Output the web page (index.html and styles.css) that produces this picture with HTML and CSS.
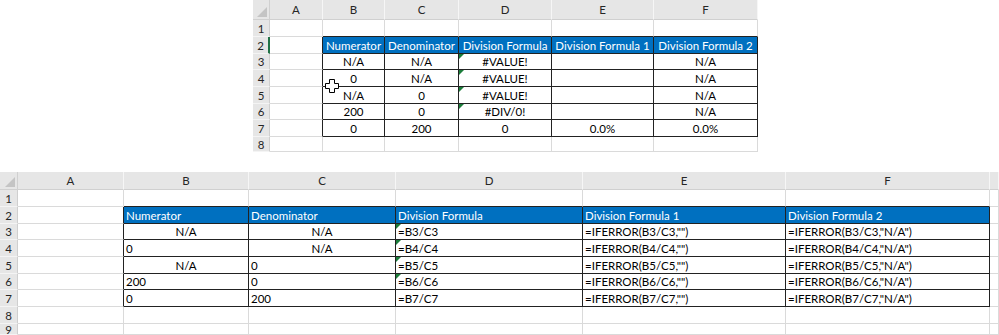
FILE: index.html
```html
<!DOCTYPE html>
<html>
<head>
<meta charset="utf-8">
<link rel="stylesheet" href="styles.css">
</head>
<body>
<div class="page">
  <div class="sheet sheet-top">
    <div class="corner"></div><div class="ch">A</div><div class="ch">B</div><div class="ch">C</div><div class="ch">D</div><div class="ch">E</div><div class="ch">F</div>

    <div class="rh">1</div><div class="c"></div><div class="c ab"></div><div class="c ab"></div><div class="c ab"></div><div class="c ab"></div><div class="c ab"></div>

    <div class="rh active">2</div><div class="c lt"></div><div class="c t hd ctr">Numerator</div><div class="c t hd ctr">Denominator</div><div class="c t hd ctr">Division Formula</div><div class="c t hd ctr">Division Formula 1</div><div class="c t hd ctr">Division Formula 2</div>

    <div class="rh">3</div><div class="c lt"></div><div class="c t ctr">N/A</div><div class="c t ctr">N/A</div><div class="c t ctr err">#VALUE!</div><div class="c t"></div><div class="c t ctr">N/A</div>

    <div class="rh">4</div><div class="c lt"></div><div class="c t ctr">0</div><div class="c t ctr">N/A</div><div class="c t ctr err">#VALUE!</div><div class="c t"></div><div class="c t ctr">N/A</div>

    <div class="rh">5</div><div class="c lt"></div><div class="c t ctr">N/A</div><div class="c t ctr">0</div><div class="c t ctr err">#VALUE!</div><div class="c t"></div><div class="c t ctr">N/A</div>

    <div class="rh">6</div><div class="c lt"></div><div class="c t ctr">200</div><div class="c t ctr">0</div><div class="c t ctr err">#DIV/0!</div><div class="c t"></div><div class="c t ctr">N/A</div>

    <div class="rh">7</div><div class="c lt"></div><div class="c t ctr">0</div><div class="c t ctr">200</div><div class="c t ctr">0</div><div class="c t ctr">0.0%</div><div class="c t ctr">0.0%</div>

    <div class="rh">8</div><div class="c"></div><div class="c"></div><div class="c"></div><div class="c"></div><div class="c"></div><div class="c"></div>

    <svg class="cursor" width="14" height="14" viewBox="0 0 14 14"><path d="M4.5 0.5h5v4h4v5h-4v4h-5v-4h-4v-5h4z" fill="#fff" stroke="#000" stroke-width="1"/></svg>
  </div>

  <div class="sheet sheet-bottom">
    <div class="corner"></div><div class="ch">A</div><div class="ch">B</div><div class="ch">C</div><div class="ch">D</div><div class="ch">E</div><div class="ch">F</div><div class="ch"></div>

    <div class="rh">1</div><div class="c"></div><div class="c ab"></div><div class="c ab"></div><div class="c ab"></div><div class="c ab"></div><div class="c ab"></div><div class="c"></div>

    <div class="rh">2</div><div class="c lt"></div><div class="c t hd">Numerator</div><div class="c t hd">Denominator</div><div class="c t hd">Division Formula</div><div class="c t hd">Division Formula 1</div><div class="c t hd">Division Formula 2</div><div class="c"></div>

    <div class="rh">3</div><div class="c lt"></div><div class="c t ctr">N/A</div><div class="c t ctr">N/A</div><div class="c t err">=B3/C3</div><div class="c t">=IFERROR(B3/C3,"")</div><div class="c t">=IFERROR(B3/C3,"N/A")</div><div class="c"></div>

    <div class="rh">4</div><div class="c lt"></div><div class="c t">0</div><div class="c t ctr">N/A</div><div class="c t err">=B4/C4</div><div class="c t">=IFERROR(B4/C4,"")</div><div class="c t">=IFERROR(B4/C4,"N/A")</div><div class="c"></div>

    <div class="rh">5</div><div class="c lt"></div><div class="c t ctr">N/A</div><div class="c t">0</div><div class="c t err">=B5/C5</div><div class="c t">=IFERROR(B5/C5,"")</div><div class="c t">=IFERROR(B5/C5,"N/A")</div><div class="c"></div>

    <div class="rh">6</div><div class="c lt"></div><div class="c t">200</div><div class="c t">0</div><div class="c t err">=B6/C6</div><div class="c t">=IFERROR(B6/C6,"")</div><div class="c t">=IFERROR(B6/C6,"N/A")</div><div class="c"></div>

    <div class="rh">7</div><div class="c lt"></div><div class="c t">0</div><div class="c t">200</div><div class="c t">=B7/C7</div><div class="c t">=IFERROR(B7/C7,"")</div><div class="c t">=IFERROR(B7/C7,"N/A")</div><div class="c"></div>

    <div class="rh">8</div><div class="c"></div><div class="c"></div><div class="c"></div><div class="c"></div><div class="c"></div><div class="c"></div><div class="c"></div>

    <div class="rh">9</div><div class="c"></div><div class="c"></div><div class="c"></div><div class="c"></div><div class="c"></div><div class="c"></div><div class="c"></div>
  </div>
</div>
</body>
</html>
```

FILE: styles.css
```css
html, body {
  margin: 0;
  padding: 0;
  background: #ffffff;
}

.page {
  font-family: Lato, "Liberation Sans", Arial, sans-serif;
  font-size: 11.5px;
  color: #000000;
  width: 999px;
  height: 335px;
  overflow: hidden;
}

.sheet {
  display: grid;
  overflow: hidden;
  position: relative;
}

.sheet-top {
  margin-left: 253px;
  width: 505px;
  grid-template-columns: 17px 53px 62px 74px 93px 102px 104px;
  grid-template-rows: 20px 17px 17px 16px 17px 17px 16px 17px 15px;
}

.sheet-bottom {
  margin-top: 20px;
  width: 999px;
  grid-template-columns: 18px 106px 125px 147px 187px 203px 204px 9px;
  grid-template-rows: 18px 17px 17px 16px 17px 17px 16px 17px 17px 11px;
}

.sheet > div {
  box-sizing: border-box;
  min-width: 0;
  white-space: nowrap;
  overflow: hidden;
}

.corner {
  position: relative;
  background: #e6e6e6;
  border-right: 1px solid #d0d0d0;
  border-bottom: 1px solid #d0d0d0;
}

.corner::after {
  content: "";
  position: absolute;
  right: 2px;
  bottom: 2px;
  width: 0;
  height: 0;
  border-left: 10px solid transparent;
  border-bottom: 10px solid #c4c4c4;
}

.ch {
  background: #e6e6e6;
  border-right: 1px solid #f6f6f6;
  border-bottom: 1px solid #d0d0d0;
  color: #262626;
  display: flex;
  align-items: center;
  justify-content: center;
}

.rh {
  background: #e6e6e6;
  border-bottom: 1px solid #f4f4f4;
  border-right: 1px solid #cfcfcf;
  color: #262626;
  display: flex;
  align-items: center;
  justify-content: center;
}

.rh.active {
  border-right: 2px solid #217346;
}

.c {
  position: relative;
  border-right: 1px solid #dadada;
  border-bottom: 1px solid #dadada;
  display: flex;
  align-items: center;
  padding: 0 2px;
}

.c.ab {
  border-bottom-color: #222;
}

.c.lt {
  border-right-color: #222;
}

.c.t {
  border-right-color: #222;
  border-bottom-color: #222;
}

.c.hd {
  background: #0070c0;
  color: #ffffff;
}

.ctr {
  justify-content: center;
}

.err::before {
  content: "";
  position: absolute;
  left: 0;
  top: 0;
  width: 0;
  height: 0;
  border-top: 5px solid #1b7d3a;
  border-right: 5px solid transparent;
}

.cursor {
  position: absolute;
  left: 72px;
  top: 79px;
}
```
